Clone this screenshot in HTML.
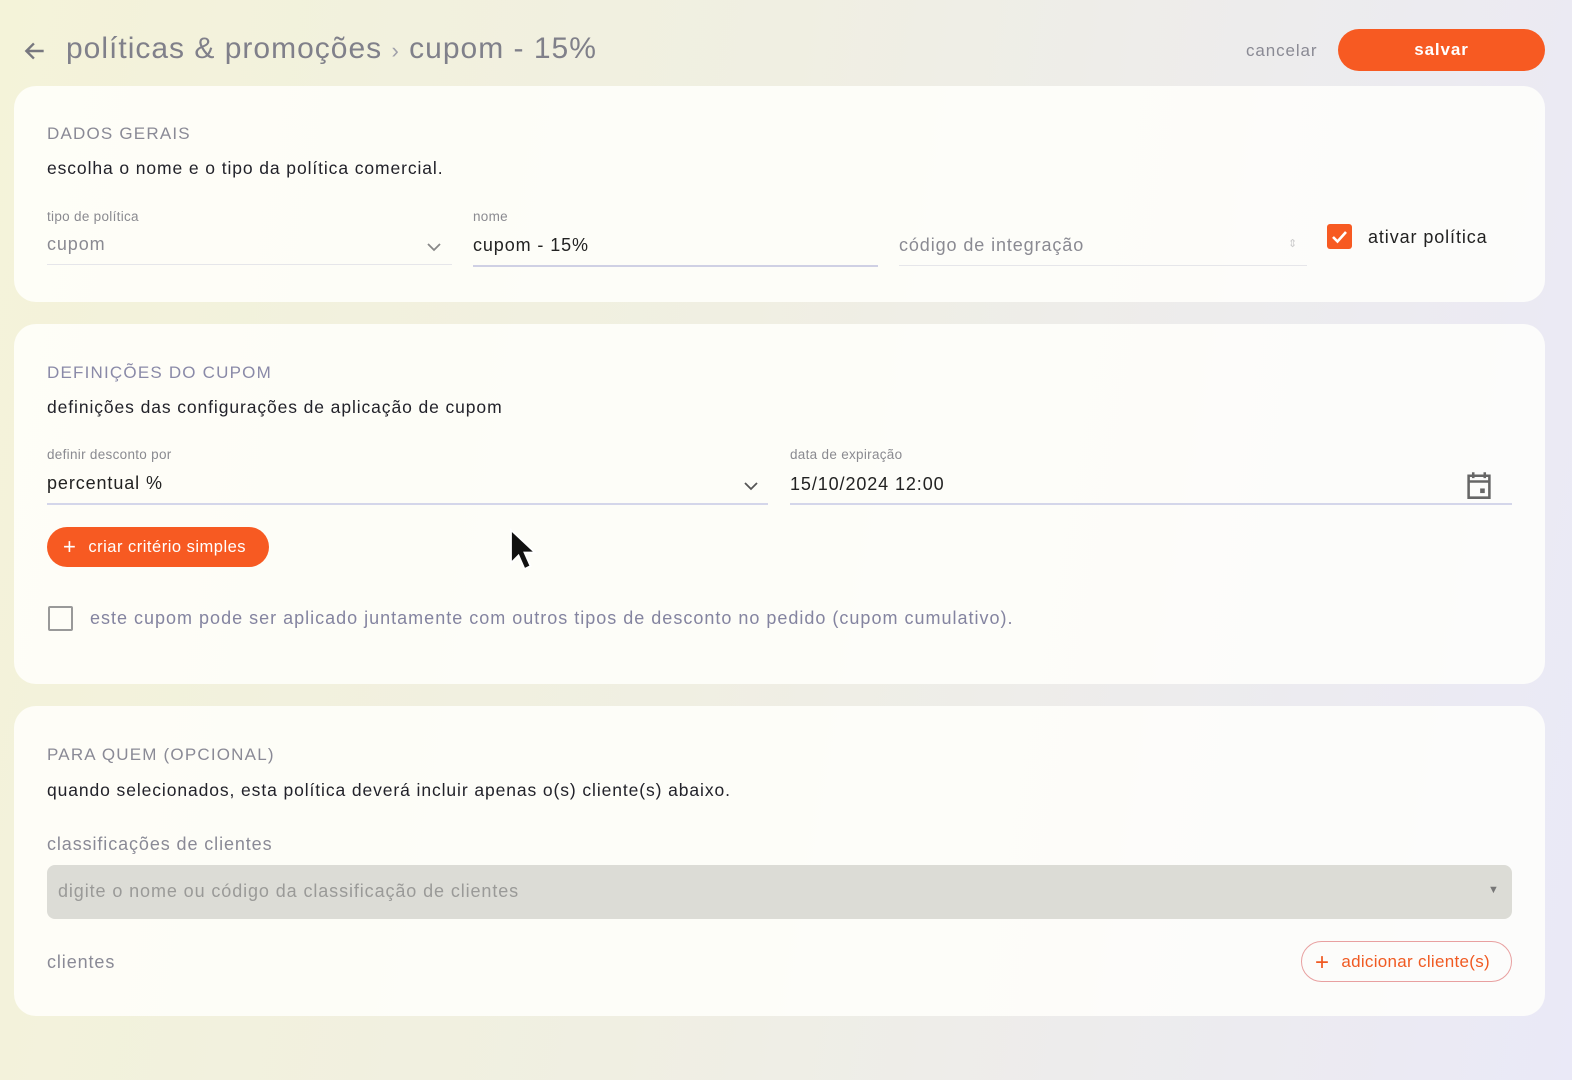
<!DOCTYPE html>
<html><head><meta charset="utf-8"><style>
*{box-sizing:border-box;margin:0;padding:0}
html,body{width:1572px;height:1080px;overflow:hidden}
body{font-family:"Liberation Sans",sans-serif;background:linear-gradient(100deg,#f4f3d9 0%,#f0efe2 45%,#eae9f7 100%);position:relative;color:#2a2a33;letter-spacing:0.9px}
.abs{position:absolute;white-space:nowrap}
.card{position:absolute;left:14px;width:1531px;background:rgba(255,255,252,0.85);border-radius:22px}
.sec{font-size:17px;letter-spacing:1.2px;color:#8a8a96}
.desc{font-size:17.5px;color:#22222a}
.lbl{font-size:13.5px;color:#8a8a90;letter-spacing:0.3px}
.line{position:absolute;height:1px;background:#d6d6e6}
</style></head><body>
<svg class="abs" style="left:22px;top:38px" width="26" height="26" viewBox="0 0 24 24"><path d="M20 12H5M11 5l-7 7 7 7" fill="none" stroke="#77777f" stroke-width="2.2"/></svg>
<div class="abs" style="left:66px;top:32px;font-size:30px;color:#80808a;letter-spacing:1px">políticas &amp; promoções <span style="font-size:22px;color:#a0a0aa">›</span> cupom - 15%</div>
<div class="abs" style="left:1246px;top:41px;font-size:17px;color:#8a8a94">cancelar</div>
<div class="abs" style="left:1338px;top:29px;width:207px;height:42px;border-radius:21px;background:#f75a22;color:#fff;font-size:17px;text-align:center;line-height:42px;font-weight:bold">salvar</div>

<div class="card" style="top:86px;height:216px"></div>
<div class="abs sec" style="left:47px;top:124px">DADOS GERAIS</div>
<div class="abs desc" style="left:47px;top:158px">escolha o nome e o tipo da política comercial.</div>
<div class="abs lbl" style="left:47px;top:209px">tipo de política</div>
<div class="abs" style="left:47px;top:234px;font-size:18px;color:#8a8a92">cupom</div>
<svg class="abs" style="left:426px;top:241px" width="16" height="12" viewBox="0 0 16 12"><path d="M2 3l6 6 6-6" fill="none" stroke="#888" stroke-width="1.8"/></svg>
<div class="line" style="left:47px;top:264px;width:405px;background:#e6e6ea"></div>
<div class="abs lbl" style="left:473px;top:209px">nome</div>
<div class="abs" style="left:473px;top:235px;font-size:18px;color:#222">cupom - 15%</div>
<div class="line" style="left:473px;top:265px;width:405px;background:#cfd0e4;height:2px"></div>
<div class="abs" style="left:899px;top:235px;font-size:18px;color:#8a8a92">código de integração</div>
<div class="abs" style="left:1288px;top:237px;font-size:11px;color:#ccc">⇕</div>
<div class="line" style="left:899px;top:265px;width:408px;background:#e6e6ea"></div>
<div class="abs" style="left:1327px;top:224px;width:25px;height:25px;background:#f75a22;border-radius:3px"><svg width="25" height="25" viewBox="0 0 25 25"><path d="M6 13l4.5 4.5L19 8" fill="none" stroke="#fff" stroke-width="2.6"/></svg></div>
<div class="abs" style="left:1368px;top:227px;font-size:18px;color:#222">ativar política</div>

<div class="card" style="top:324px;height:360px"></div>
<div class="abs sec" style="left:47px;top:363px;color:#8a8aa8">DEFINIÇÕES DO CUPOM</div>
<div class="abs desc" style="left:47px;top:397px">definições das configurações de aplicação de cupom</div>
<div class="abs lbl" style="left:47px;top:447px">definir desconto por</div>
<div class="abs" style="left:47px;top:473px;font-size:18px;color:#222">percentual %</div>
<svg class="abs" style="left:743px;top:480px" width="16" height="12" viewBox="0 0 16 12"><path d="M2 3l6 6 6-6" fill="none" stroke="#555" stroke-width="1.8"/></svg>
<div class="line" style="left:47px;top:503px;width:721px;background:#d4d6ea;height:2px"></div>
<div class="abs lbl" style="left:790px;top:447px">data de expiração</div>
<div class="abs" style="left:790px;top:474px;font-size:18px;color:#222">15/10/2024 12:00</div>
<svg class="abs" style="left:1465px;top:470px" width="28" height="30" viewBox="0 0 24 26"><path d="M3 5h18v19H3z M3 10h18" fill="none" stroke="#666" stroke-width="2.2"/><path d="M7 2v5M17 2v5" stroke="#666" stroke-width="2.2"/><rect x="13" y="16" width="4" height="4" fill="#666"/></svg>
<div class="line" style="left:790px;top:503px;width:722px;background:#d4d6ea;height:2px"></div>
<div class="abs" style="left:47px;top:527px;width:222px;height:40px;border-radius:20px;background:#f75a22;color:#fff;font-size:16.5px;line-height:40px;padding-left:16px;letter-spacing:0.5px"><span style="font-size:22px;vertical-align:-2px;margin-right:12px">+</span>criar critério simples</div>
<svg class="abs" style="left:508px;top:528px" width="30" height="46" viewBox="0 0 20 30"><path d="M2 1v22l5-5 4 9 4-2-4-9h7z" fill="#111" stroke="#fff" stroke-width="1.2"/></svg>
<div class="abs" style="left:48px;top:606px;width:25px;height:25px;border:2px solid #999;border-radius:2px"></div>
<div class="abs" style="left:90px;top:608px;font-size:18px;color:#8484a0;letter-spacing:1px">este cupom pode ser aplicado juntamente com outros tipos de desconto no pedido (cupom cumulativo).</div>

<div class="card" style="top:706px;height:310px"></div>
<div class="abs sec" style="left:47px;top:745px">PARA QUEM (OPCIONAL)</div>
<div class="abs desc" style="left:47px;top:780px">quando selecionados, esta política deverá incluir apenas o(s) cliente(s) abaixo.</div>
<div class="abs" style="left:47px;top:834px;font-size:18px;color:#8a8a96">classificações de clientes</div>
<div class="abs" style="left:47px;top:865px;width:1465px;height:54px;border-radius:8px;background:#dcdcd6;color:#9a9a98;font-size:18px;line-height:52px;padding-left:11px">digite o nome ou código da classificação de clientes</div>
<div class="abs" style="left:1488px;top:884px;font-size:11px;color:#777">▼</div>
<div class="abs" style="left:47px;top:952px;font-size:18px;color:#8a8a96">clientes</div>
<div class="abs" style="left:1301px;top:941px;width:211px;height:41px;border:1px solid #e8a0a0;border-radius:21px;color:#f05a22;font-size:17px;line-height:39px;padding-left:13px;letter-spacing:0.3px"><span style="font-size:24px;vertical-align:-3px;margin-right:12px">+</span>adicionar cliente(s)</div>
</body></html>
